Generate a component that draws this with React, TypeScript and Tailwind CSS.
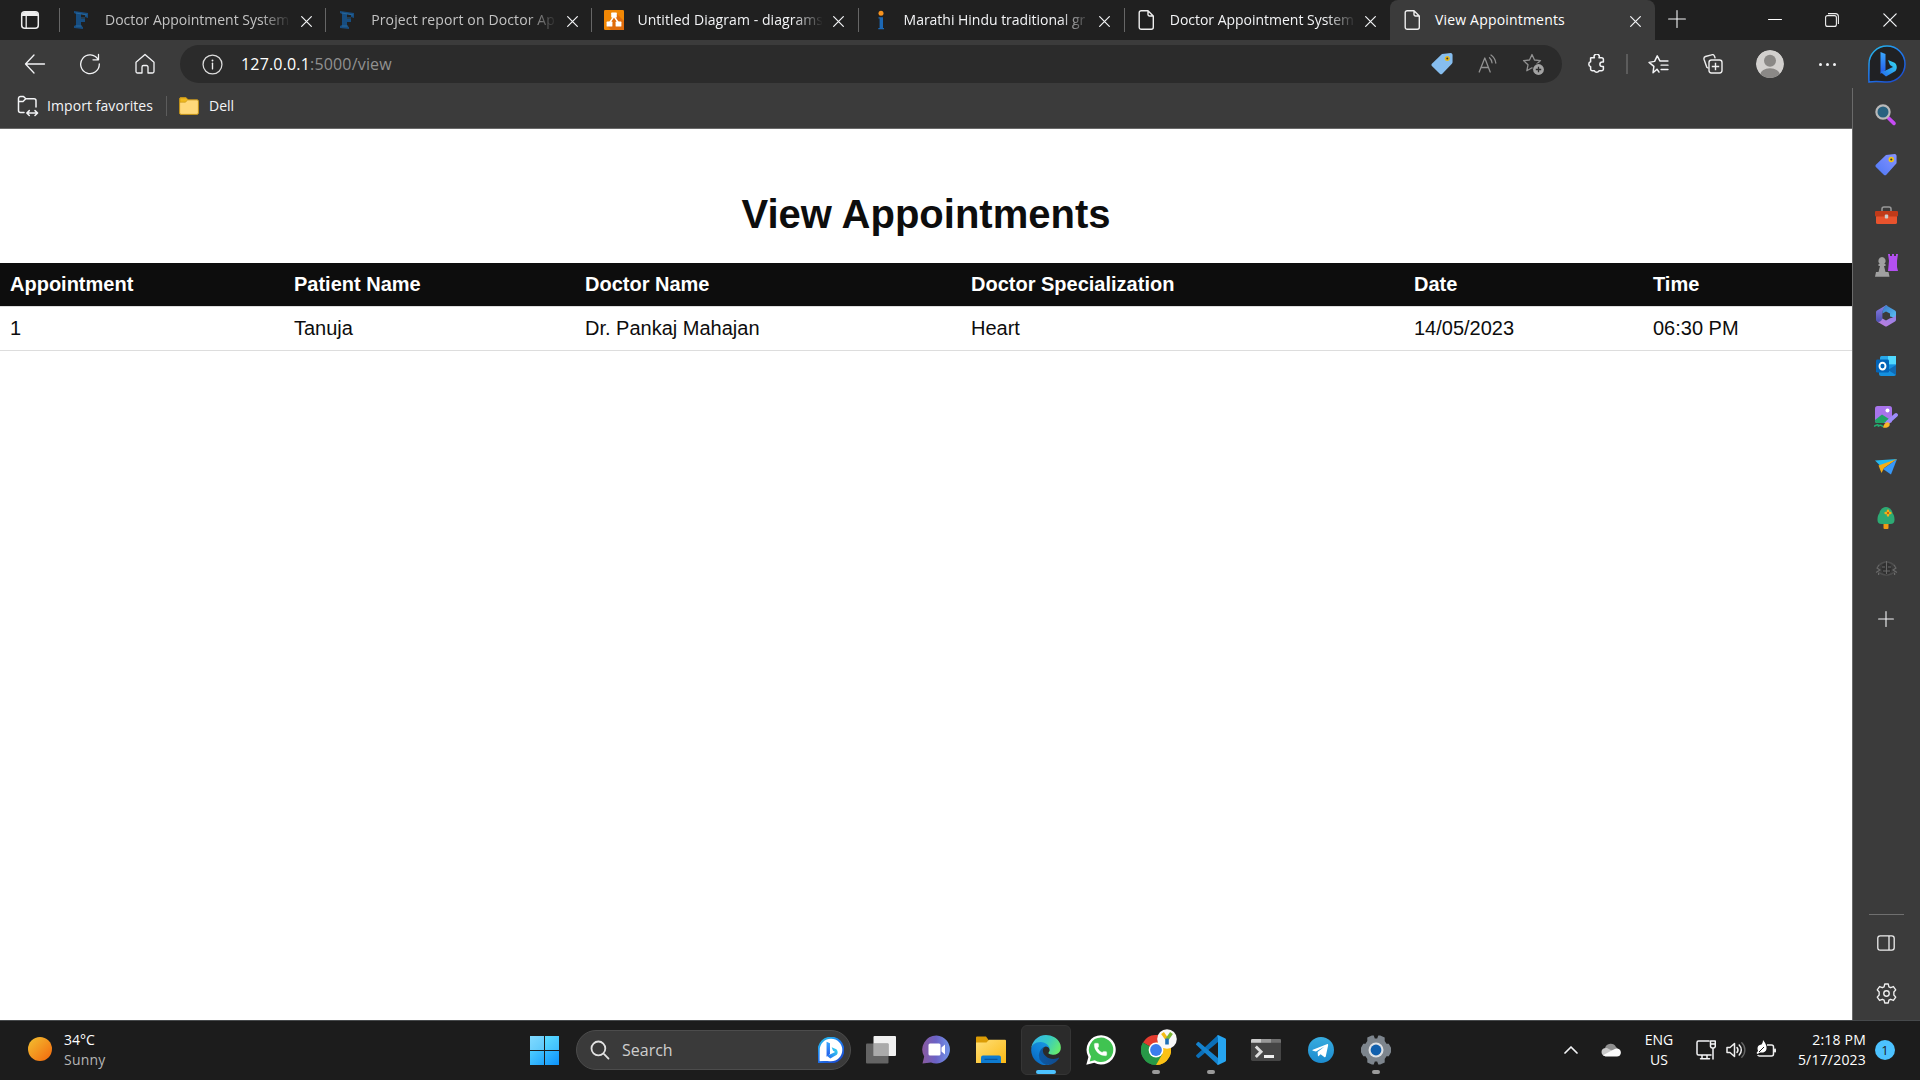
import React from "react";
import { Phone } from "lucide-react";

type IconProps = { s?: number; vb?: string; className?: string; children: React.ReactNode; w?: number };

function Svg({ s = 20, w, vb = "0 0 20 20", className = "", children }: IconProps) {
  return (
    <svg width={w ?? s} height={s} viewBox={vb} fill="none" className={"shrink-0 " + className}>
      {children}
    </svg>
  );
}

function Line({ s = 20, vb, className = "text-gray-100", sw = 1.3, d }: { s?: number; vb?: string; className?: string; sw?: number; d: string }) {
  return (
    <Svg s={s} vb={vb} className={className}>
      <path d={d} stroke="currentColor" strokeWidth={sw} strokeLinecap="round" strokeLinejoin="round" />
    </Svg>
  );
}

function Cell({ className, children }: { className: string; children?: React.ReactNode }) {
  return <div className={"flex shrink-0 items-center justify-center " + className}>{children}</div>;
}

const Close = ({ s = 10, sw = 1.2 }: { s?: number; sw?: number }) => (
  <Line s={s} vb="0 0 10 10" sw={sw} d="M.6 .6L9.4 9.4M9.4 .6L.6 9.4" />
);

const Letter = () => (
  <Svg s={20} w={16} vb="0 0 16 20">
    <path d="M1 1L15 3V8L12 7V5L8 4V9L12 9V12H8V16L10 17V19L1 18V16L3 15V4L1 3Z" fill="#174d80" />
    <path d="M3 3L14 5M8 8H12M3 16H9" stroke="#2b6ea4" strokeWidth=".8" />
  </Svg>
);

const Diagram = () => (
  <Svg s={20} className="ml-0.5">
    <rect width="20" height="20" rx="1.2" fill="#f08705" />
    <path d="M12 3L20 11V20H7L3 16L9 7Z" fill="#df6c0c" />
    <path d="M9.5 7L5.5 13M10.5 7L14.5 13" stroke="#fff" strokeWidth="1.4" />
    <rect x="7.2" y="2.6" width="5.6" height="5" rx=".6" fill="#fff" />
    <rect x="2.6" y="11.6" width="5.8" height="5" rx=".6" fill="#fff" />
    <rect x="11.6" y="11.6" width="5.8" height="5" rx=".6" fill="#fff" />
  </Svg>
);

const Info = () => (
  <Svg s={20} className="ml-0.5">
    <circle cx="10" cy="3.2" r="2.5" fill="#f7931e" />
    <path d="M7.5 7.2H12V18H13V19.2H7.3V18H8.6V8.4H7.5Z" fill="#1c68b5" />
  </Svg>
);

const Doc = () => (
  <Svg s={22} w={17} vb="0 0 17 22" className="ml-0.5">
    <path d="M3.2 1.7H10L15.3 7V18.3A2 2 0 0 1 13.3 20.3H3.2A2 2 0 0 1 1.2 18.3V3.7A2 2 0 0 1 3.2 1.7ZM10 1.7V5.5A1.5 1.5 0 0 0 11.5 7H15.3" stroke="#eee" strokeWidth="1.4" strokeLinejoin="round" />
  </Svg>
);

const tabs = [
  { icon: <Letter />, title: "Doctor Appointment System", tone: "text-[#c3c3c3]" },
  { icon: <Letter />, title: "Project report on Doctor Ap", tone: "text-[#c3c3c3] tracking-[0.13px]" },
  { icon: <Diagram />, title: "Untitled Diagram - diagrams", tone: "text-gray-100 tracking-[0.07px]" },
  { icon: <Info />, title: "Marathi Hindu traditional gr", tone: "text-gray-100" },
  { icon: <Doc />, title: "Doctor Appointment System", tone: "text-gray-100" },
];

function TabBar() {
  return (
    <div className="flex h-10 items-center bg-[#202020] text-[14px] tracking-[-0.02px]">
      <Cell className="h-10 w-[59px]">
        <Svg s={20}>
          <rect x="1.7" y="1.7" width="16.6" height="16.6" rx="3" stroke="#eee" strokeWidth="1.5" />
          <path d="M2 4.5A3 3 0 0 1 5 2H15A3 3 0 0 1 18 4.5V6H2Z" fill="#eee" />
          <path d="M6.2 6V18" stroke="#eee" strokeWidth="1.3" />
        </Svg>
      </Cell>
      {tabs.map((t, i) => (
        <div key={i} className="flex h-10 w-[266.2px] shrink-0 items-center">
          <div className="h-6 w-px shrink-0 bg-[#666]" />
          <Cell className="ml-[11px] w-5">{t.icon}</Cell>
          <div className={"mb-0.5 ml-3.5 w-[186px] overflow-hidden whitespace-nowrap [mask-image:linear-gradient(to_right,black_84%,transparent)] " + t.tone}>{t.title}</div>
          <Cell className="ml-[9px] mt-0.5 w-3"><Close s={11} sw={1.1} /></Cell>
        </div>
      ))}
      <div className="flex h-10 w-[265px] shrink-0 items-center rounded-t-lg bg-[#3b3b3b] text-white">
        <Cell className="ml-[12px] w-5"><Doc /></Cell>
        <div className="mb-0.5 ml-[13px] w-[190px] whitespace-nowrap tracking-[0.19px]">View Appointments</div>
        <Cell className="ml-[5px] mt-0.5 w-3"><Close s={11} sw={1.1} /></Cell>
      </div>
      <Cell className="w-11"><Line s={18} vb="0 0 18 18" sw={1.1} className="text-gray-100 mb-0.5" d="M9 .6V17.4M.6 9H17.4" /></Cell>
      <Cell className="ml-12 w-[57px]"><Line s={14} vb="0 0 14 14" sw={1} className="text-white" d="M.5 6.5H13.5" /></Cell>
      <Cell className="w-14">
        <Svg s={14} vb="0 0 14 14">
          <rect x=".6" y="2.6" width="10.8" height="10.8" rx="2" stroke="#eee" strokeWidth="1.1" />
          <path d="M3 .6H10.4A3 3 0 0 1 13.4 3.6V11" stroke="#eee" strokeWidth="1.1" />
        </Svg>
      </Cell>
      <Cell className="w-[60px]"><Close s={14} sw={0.9} /></Cell>
    </div>
  );
}

const starD = "M10 1.5L12.5 7L18.5 7.6L14 11.8L15.2 17.8L10 14.8L4.8 17.8L6 11.8L1.5 7.6L7.5 7Z";

function BingMark({ dark, s }: { dark?: boolean; s: number }) {
  return (
    <Svg s={s} vb="0 0 38 38">
      <defs>
        <linearGradient id="bingRing" x1="0" y1="0" x2="0.7" y2="1">
          <stop stopColor="#27c3e8" /><stop offset="0.5" stopColor="#1f7df0" /><stop offset="1" stopColor="#1b4fd0" />
        </linearGradient>
        <linearGradient id="bingB" x1="0" y1="0" x2="0" y2="1"><stop stopColor="#3aa8ff" /><stop offset="1" stopColor="#2358e8" /></linearGradient>
        <linearGradient id="bingLeaf" x1="0" y1="1" x2="1" y2="0"><stop stopColor="#2364f0" /><stop offset="1" stopColor="#35dff0" /></linearGradient>
      </defs>
      <path d="M19 1A18 18 0 1 1 19 37C13 37 9 35.5 1 37C.6 32 1 27 1 19A18 18 0 0 1 19 1Z" fill={dark ? "#202124" : "#fff"} stroke="url(#bingRing)" strokeWidth={dark ? 1.5 : 3} />
      <path d="M12.5 7L17.5 9V25L12.5 29Z" fill="url(#bingB)" />
      <path d="M12.5 27L18 31.5L27.5 26C30 23 28.5 18.5 26 17.5L20 15L22 20L25 22L17.5 25.5Z" fill="url(#bingLeaf)" />
    </Svg>
  );
}

function Toolbar() {
  return (
    <div className="flex h-12 items-center">
      <Cell className="ml-2 w-[54px]"><Line s={22} vb="0 0 22 22" d="M20.5 11H1.5M10 2L1.5 11L10 20" /></Cell>
      <Cell className="w-[56px]">
        <Line s={22} vb="0 0 22 22" d="M19 6.5A9.3 9.3 0 1 0 20.3 11M19.5 1.5V6.8H14" />
      </Cell>
      <Cell className="w-[54px]"><Line s={22} vb="0 0 22 22" d="M2 9.2L11 1.5L20 9.2V18.5A1.5 1.5 0 0 1 18.5 20H14V14A1.5 1.5 0 0 0 12.5 12.5H9.5A1.5 1.5 0 0 0 8 14V20H3.5A1.5 1.5 0 0 1 2 18.5Z" /></Cell>
      <div className="ml-2 flex h-[38px] w-[1382px] shrink-0 items-center rounded-full bg-[#2b2b2b]">
        <Cell className="ml-[22px] w-5">
          <Svg s={21}>
            <circle cx="10" cy="10" r="9" stroke="#ddd" strokeWidth="1.2" />
            <path d="M10 8.8V14.2" stroke="#eee" strokeWidth="1.3" strokeLinecap="round" />
            <circle cx="10" cy="6.2" r=".9" fill="#eee" />
          </Svg>
        </Cell>
        <div className="ml-[19px] flex-1 text-[16px] tracking-[0.17px] text-[#919191]"><span className="text-white">127.0.0.1</span>:5000/view</div>
        <Cell className="w-6">
          <Svg s={22}>
            <path d="M10 .8L18 0A2 2 0 0 1 19.6 1.6V8.5A2 2 0 0 1 19 9.8L10.3 18.8A1.6 1.6 0 0 1 8 18.8L.8 11.8A1.6 1.6 0 0 1 .8 9.8Z" fill="#86bdee" />
            <circle cx="14.8" cy="5" r="2.3" fill="#e6b81c" /><circle cx="14.8" cy="5" r=".9" fill="#333" />
          </Svg>
        </Cell>
        <Cell className="ml-[22px] w-6"><Line s={20} className="text-[#919191]" d="M1.2 18L6.8 4L12.2 18M3 13.5H10.4M11.5 3.8A7.5 7.5 0 0 1 14 8.8M13 1A11.5 11.5 0 0 1 17.8 9" /></Cell>
        <Cell className="ml-[21px] mr-[17px] w-6">
          <Svg s={22} vb="0 0 22 22">
            <path d={starD} stroke="#919191" strokeWidth="1.3" strokeLinejoin="round" />
            <circle cx="16.5" cy="16.5" r="6.2" fill="#2b2b2b" /><circle cx="16.5" cy="16.5" r="5.4" fill="#a3a3a3" />
            <path d="M16.5 13.8V19.2M13.8 16.5H19.2" stroke="#2b2b2b" strokeWidth="1.3" />
          </Svg>
        </Cell>
      </div>
      <Cell className="ml-[23px] w-6">
        <Line s={20} sw={1.5} d="M4 3.8H7.4A2.6 2.6 0 1 1 12 3.8H14.6A1.8 1.8 0 0 1 16.4 5.6V8H15.2A2.3 2.3 0 0 0 15.2 12.6H16.4V15A1.8 1.8 0 0 1 14.6 16.8H12A2.6 2.6 0 0 1 7.4 16.8H5.4A1.8 1.8 0 0 1 3.6 15V12.6A2.5 2.5 0 0 1 3.6 7.8V4Z" />
      </Cell>
      <div className="ml-[17px] h-5 w-0.5 bg-[#5c5c5c]" />
      <Cell className="ml-[18px] w-6"><Line s={21} sw={1.4} d="M10.5 17.2L8.6 14.5L4.8 17.8L5.6 11.8L1 8L6.3 7L8.8 1.8L11.3 6.6H19M12.5 10.6H19M12.5 14.8H19" /></Cell>
      <Cell className="ml-[31px] w-6">
        <Svg s={20}>
          <path d="M5 14L3.8 13.3L1 5.2A2.4 2.4 0 0 1 2.5 2.5L8.5 .8A2.4 2.4 0 0 1 11.5 2.2L12 3.8" stroke="#eee" strokeWidth="1.4" strokeLinecap="round" />
          <rect x="6" y="6" width="13" height="13" rx="2.4" stroke="#eee" strokeWidth="1.4" />
          <path d="M12.5 8.8V16.2M8.8 12.5H16.2" stroke="#eee" strokeWidth="1.4" />
        </Svg>
      </Cell>
      <Cell className="ml-[31px] w-7">
        <Svg s={28} vb="0 0 28 28" className="rounded-full">
          <circle cx="14" cy="14" r="14" fill="#d2d0ce" />
          <circle cx="14" cy="10.8" r="6" fill="#8a8886" />
          <ellipse cx="14" cy="25" rx="10" ry="6.7" fill="#8a8886" />
        </Svg>
      </Cell>
      <Cell className="ml-[33px] w-5 gap-1"><i className="size-[3px] rounded-full bg-gray-100" /><i className="size-[3px] rounded-full bg-gray-100" /><i className="size-[3px] rounded-full bg-gray-100" /></Cell>
      <Cell className="ml-[31px] w-[38px]"><BingMark dark s={38} /></Cell>
    </div>
  );
}

function Favorites() {
  return (
    <div className="flex h-[41px] items-center border-b border-[#6a6a6a] pb-1 pl-[17px] text-[14px] text-gray-100">
      <Line s={22} vb="0 0 22 22" sw={1.5} d="M7 17.5H3.5A2 2 0 0 1 1.5 15.5V3.5A2 2 0 0 1 3.5 1.5H6.5L8.8 3.8H17A2 2 0 0 1 19 5.8V12M1.5 6.5H6L8.8 3.8M10 18H20.5M12.3 15.6L9.8 18L12.3 20.5M18 15.6L20.6 18L18 20.5" />
      <span className="mb-0.5 ml-2 w-[107px] whitespace-nowrap tracking-[0.07px]">Import favorites</span>
      <div className="ml-3 h-5 w-px bg-[#5c5c5c]" />
      <Svg s={18} w={20} vb="0 0 20 18" className="ml-3">
        <path d="M.6 16V2A1.4 1.4 0 0 1 2 .6H7L9 2.8H18A1.4 1.4 0 0 1 19.4 4.2V16A1.4 1.4 0 0 1 18 17.4H2A1.4 1.4 0 0 1 .6 16Z" fill="#ffd97a" stroke="#c39217" />
        <path d="M1 5.2V1H7L8.8 2.8L6.5 5.2Z" fill="#f0b91f" stroke="#c39217" strokeWidth=".6" />
      </Svg>
      <span className="mb-0.5 ml-2.5">Dell</span>
    </div>
  );
}

const columns = [
  { head: "Appointment", value: "1", w: "w-[284px]" },
  { head: "Patient Name", value: "Tanuja", w: "w-[291px]" },
  { head: "Doctor Name", value: "Dr. Pankaj Mahajan", w: "w-[386px]" },
  { head: "Doctor Specialization", value: "Heart", w: "w-[443px]" },
  { head: "Date", value: "14/05/2023", w: "w-[239px]" },
  { head: "Time", value: "06:30 PM", w: "w-[209px]" },
];

function Page() {
  return (
    <main className="min-h-0 flex-1 bg-white font-['Liberation_Sans',Arial,sans-serif] text-[20px] text-[#0d0d0d]">
      <h1 className="mt-[62px] h-[72px] text-center text-[40px] font-bold leading-[46px]">View Appointments</h1>
      <table className="w-[1852px] table-fixed border-collapse text-left">
        <thead>
          <tr className="h-[43px] bg-[#0d0d0d] text-white">
            {columns.map((c) => <th key={c.head} className={"border-b border-[#ddd] px-2.5 py-0 font-bold " + c.w}>{c.head}</th>)}
          </tr>
        </thead>
        <tbody>
          <tr className="h-11">
            {columns.map((c) => <td key={c.head} className="border-b border-[#ddd] px-2.5 py-0">{c.value}</td>)}
          </tr>
        </tbody>
      </table>
    </main>
  );
}

const sideIcons = [
  <Svg s={22} vb="0 0 22 22">
    <path d="M13.5 14L19 19.4" stroke="#c74bf5" strokeWidth="3.6" strokeLinecap="round" />
    <circle cx="8" cy="8" r="6.6" fill="#28617f" stroke="#b9b9b9" strokeWidth="2.2" />
  </Svg>,
  <Svg s={22}>
    <defs><linearGradient id="tg" x1="0" y1="1" x2="1" y2="0"><stop stopColor="#4d78f5" /><stop offset="1" stopColor="#8793ff" /></linearGradient></defs>
    <path d="M10 .8L18 0A2 2 0 0 1 19.6 1.6V8.5L10.3 18.8A1.6 1.6 0 0 1 8 18.8L.8 11.8A1.6 1.6 0 0 1 .8 9.8Z" fill="url(#tg)" />
    <circle cx="14.8" cy="5" r="2.5" fill="#f0c414" /><circle cx="14.8" cy="5" r="1" fill="#333" />
  </Svg>,
  <Svg s={18} w={23} vb="0 0 23 18">
    <path d="M7 5V3A2 2 0 0 1 9 1H14A2 2 0 0 1 16 3V5" stroke="#999" strokeWidth="1.5" />
    <rect x="1" y="9" width="21" height="9" rx="1.6" fill="#e8532d" /><rect y="5" width="23" height="5.5" rx="1" fill="#c03a19" />
    <rect x="9.8" y="8.5" width="3.4" height="4" rx="1" fill="#ccc" />
  </Svg>,
  <Svg s={23} w={23} vb="0 0 23 23">
    <path d="M13 0H15V2H17V0H19V2H21V0H23L22 7V13L23 17H13L14 7Z" fill="#b350f0" />
    <path d="M7 3A4 4 0 0 1 9.3 10H10.5V12H9L10.5 18H13.5L14.5 22.8H0L1 18H3.5L5 12H3.5V10H4.7A4 4 0 0 1 7 3Z" fill="#a0a0a0" />
  </Svg>,
  <Svg s={22} vb="0 0 22 22">
    <defs>
      <linearGradient id="m365a" x1="0" y1="0" x2="0" y2="1"><stop stopColor="#8d7ee6" /><stop offset="1" stopColor="#4b4fae" /></linearGradient>
      <linearGradient id="m365b" x1="0" y1="0" x2="1" y2="1"><stop stopColor="#3a78c8" /><stop offset="1" stopColor="#58c4f5" /></linearGradient>
      <linearGradient id="m365c" x1="0" y1="1" x2="1" y2="0"><stop stopColor="#c27bdc" /><stop offset="1" stopColor="#8f83ea" /></linearGradient>
    </defs>
    <path d="M11 .2L2 5.4A2 2 0 0 0 1 7.2V14.8A2 2 0 0 0 2 16.6L4 17.5L7.4 15V8.5C7.4 5 9 2 12.5 .8Z" fill="url(#m365a)" />
    <path d="M11 .2L20 5.4A2 2 0 0 1 21 7.2V13.5C20 13 19 12.5 15 11.5V8.6L11 6.4L7.4 8.5C7.4 4.5 9 1.5 11 .2Z" fill="url(#m365b)" />
    <path d="M21 9.5V14.8A2 2 0 0 1 20 16.6L12 21.3A2 2 0 0 1 10 21.3L2 16.6C5 17.5 6 16.5 7.4 13.6L11 15.6L15 13.3C18 12.5 20 12 21 9.5Z" fill="url(#m365c)" />
  </Svg>,
  <Svg s={21} vb="0 0 21 21">
    <rect x="4" y="0" width="16" height="16" rx="1.5" fill="#28a8ea" /><rect x="12" y="0" width="8" height="8" fill="#50d9ff" />
    <path d="M3 9L20 9V18A2 2 0 0 1 18 20H5A2 2 0 0 1 3 18Z" fill="#1490df" /><path d="M20 9L12 14L20 19Z" fill="#0f6ab4" />
    <rect y="3.6" width="13" height="13" rx="1.4" fill="#0364b8" />
    <ellipse cx="6.5" cy="10.1" rx="3" ry="3.4" stroke="#fff" strokeWidth="1.9" />
  </Svg>,
  <Svg s={23} w={24} vb="0 0 24 23">
    <rect x="1" y="0" width="17" height="17" rx="2.5" fill="#a874ec" /><circle cx="13.5" cy="4.5" r="2" fill="#fff" />
    <path d="M1 14L8 8.5L15 13L10 17H3A2 2 0 0 1 1 15Z" fill="#21a366" />
    <path d="M0 20.5C3 18 5 18 4 20.5C6 18.5 8 19 9 21" stroke="#20b070" strokeWidth="1.5" />
    <path d="M14 16L22 9" stroke="#9d8dfa" strokeWidth="3.8" strokeLinecap="round" /><path d="M9 21.5C10 17 13 14.5 15.5 17.5C16.5 20.5 13 22.5 9 21.5Z" fill="#f8b52a" />
  </Svg>,
  <Svg s={16} w={22} vb="0 0 22 16">
    <path d="M0 1.5L22 0L6 7.5Z" fill="#25b8ef" /><path d="M22 0L16 15.5L8 10Z" fill="#3898f7" /><path d="M22 0L3.5 6.5L6.5 14L9 9Z" fill="#f6ae16" />
  </Svg>,
  <Svg s={22} vb="0 0 22 22">
    <rect x="8.5" y="15" width="5" height="7" rx="1" fill="#f29a14" />
    <path d="M11 0C15 0 17.5 4 17.5 6C19 8 19.5 10 19.5 12.5A4.3 4.3 0 0 1 15.5 17H6.5A4.3 4.3 0 0 1 2.5 12.5C2.5 10 3 8 4.5 6C4.5 4 7 0 11 0Z" fill="#2daa74" />
    <path d="M13 3.6V8.4M10.6 6H15.4" stroke="#f6ae16" strokeWidth="2.4" strokeLinecap="round" /><circle cx="13" cy="6" r="1" fill="#b34c11" />
  </Svg>,
  <Svg s={17} w={23} vb="0 0 23 17">
    <path d="M3 6C6 3 8 2 11.5 2S17 3 20 6M2 11C6 14.5 8 15 11.5 15S17 14.5 21 11" stroke="#4e4e4e" strokeWidth="1.4" />
    <ellipse cx="11.5" cy="8.5" rx="5" ry="6" fill="#2f2f2f" />
    <path d="M7 7H10M13 7H16M8 11H15M11.5 1V14M4 5L2 8L5 10L1 12.5M19 5L21 8L18 10L22 12.5" stroke="#686868" strokeWidth="1.1" />
    <path d="M3 14H4.2M19 14H20.2" stroke="#999" strokeWidth="1.2" />
  </Svg>,
  <Line s={16} vb="0 0 16 16" sw={1.1} d="M8 .6V15.4M.6 8H15.4" />,
];

const gearD = "M8.3 1H11.7L12.3 3.6L14 4.5L16.6 3.4L18.8 6.5L17 8.6V11.4L18.8 13.5L16.6 16.6L14 15.5L12.3 16.4L11.7 19H8.3L7.7 16.4L6 15.5L3.4 16.6L1.2 13.5L3 11.4V8.6L1.2 6.5L3.4 3.4L6 4.5L7.7 3.6Z";

function Sidebar() {
  return (
    <aside className="flex w-[68px] shrink-0 flex-col items-center border-l border-[#6a6a6a] bg-[#3b3b3b] pr-px pt-[1.5px]">
      {sideIcons.map((icon, i) => <Cell key={i} className="h-[50.4px] w-full">{icon}</Cell>)}
      <div className="mt-auto h-px w-[35px] bg-[#6f6f6f]" />
      <Cell className="mt-[2px] h-[51px]">
        <Svg s={16} w={18} vb="0 0 18 16">
          <rect x=".8" y=".8" width="16.4" height="14.4" rx="2.4" stroke="#eee" strokeWidth="1.3" /><path d="M12 1V15" stroke="#eee" strokeWidth="1.3" />
        </Svg>
      </Cell>
      <Cell className="mb-[2px] h-[50px]">
        <Svg s={21}><path d={gearD} stroke="#eee" strokeWidth="1.3" strokeLinejoin="round" /><circle cx="10" cy="10" r="2.6" stroke="#eee" strokeWidth="1.3" /></Svg>
      </Cell>
    </aside>
  );
}

const apps: { icon: React.ReactNode; dot?: boolean; active?: boolean }[] = [
  {
    icon: (
      <Svg s={30} vb="0 0 30 30">
        <rect x="7.5" y="1" width="22.5" height="20" rx="1" fill="#f0f0f0" />
        <rect x="0" y="8.5" width="22.5" height="20" rx="1" fill="#777" fillOpacity=".8" /><rect x="7.5" y="8.5" width="15" height="12.5" fill="#aaa" />
      </Svg>
    ),
  },
  {
    icon: (
      <Svg s={29} vb="0 0 29 29">
        <defs><linearGradient id="chat" x1="0" y1="0" x2="1" y2="0"><stop stopColor="#8a5a9f" /><stop offset=".5" stopColor="#6b62c6" /><stop offset="1" stopColor="#7296e8" /></linearGradient></defs>
        <path d="M14.5 .5A14 14 0 1 1 9 27.6L.5 28.5L2.2 21.5A14 14 0 0 1 14.5 .5Z" fill="url(#chat)" />
        <rect x="6.5" y="8.5" width="12" height="12" rx="1.5" fill="#fff" /><path d="M19.5 12.5L23 9.5V19.5L19.5 16.5Z" fill="#fff" />
      </Svg>
    ),
  },
  {
    icon: (
      <Svg s={30} vb="0 0 30 30">
        <defs><linearGradient id="fold" x1="0" y1="0" x2="1" y2="1"><stop stopColor="#ffdf77" /><stop offset="1" stopColor="#fbb914" /></linearGradient></defs>
        <path d="M0 2.6A1 1 0 0 1 1 1.6H10L13 5.5V9H0Z" fill="#dc9c05" />
        <path d="M0 7.5H10.5L13 4.8H29A1 1 0 0 1 30 5.8V28H0Z" fill="url(#fold)" />
        <path d="M5 28V22.5A2 2 0 0 1 7 20.5H23A2 2 0 0 1 25 22.5V28Z" fill="#0e7bd0" /><path d="M8.5 24.3H21.5" stroke="#084d90" />
      </Svg>
    ),
  },
  {
    active: true,
    icon: (
      <Svg s={30} vb="0 0 256 259">
        <defs>
          <linearGradient id="e1" x1="0" y1="0" x2="1" y2="0"><stop stopColor="#0c59a4" /><stop offset="1" stopColor="#114a8b" /></linearGradient>
          <linearGradient id="e2" x1="1" y1="0" x2="0.3" y2="1"><stop stopColor="#1b9de2" /><stop offset=".6" stopColor="#0f7fd6" /><stop offset="1" stopColor="#0868bf" /></linearGradient>
          <linearGradient id="e3" x1="0" y1="0.2" x2="1" y2=".6"><stop stopColor="#35b5ea" /><stop offset=".5" stopColor="#36c9c6" /><stop offset="1" stopColor="#66eb6e" /></linearGradient>
        </defs>
        <path fill="url(#e1)" d="M235.68 195.46a93.73 93.73 0 0 1-10.54 4.71 101.87 101.87 0 0 1-35.9 6.46c-47.32 0-88.54-32.55-88.54-74.32A31.48 31.48 0 0 1 117.13 105c-42.8 1.8-53.8 46.4-53.8 72.53 0 73.88 68.09 81.37 82.76 81.37 7.91 0 19.84-2.3 27-4.56l1.31-.44a128.34 128.34 0 0 0 66.6-52.8 4 4 0 0 0-5.32-5.64z" />
        <path fill="url(#e2)" d="M105.73 246.42A79.2 79.2 0 0 1 83 225.08a80.72 80.72 0 0 1 29.5-120.79c3.12-1.47 8.45-4.13 15.54-4a32.35 32.35 0 0 1 25.69 13 31.88 31.88 0 0 1 6.36 18.66c0-.21 24.46-79.6-80-79.6-43.9 0-80 41.66-80 78.21a130.15 130.15 0 0 0 12.11 56 128 128 0 0 0 156.38 67.11 75.55 75.55 0 0 1-62.78-8z" />
        <path fill="url(#e3)" d="M152.33 148.86c-.81 1.05-3.3 2.5-3.3 5.66 0 2.61 1.7 5.12 4.72 7.23 14.38 10 41.49 8.68 41.56 8.68a59.56 59.56 0 0 0 30.27-8.35A61.38 61.38 0 0 0 256 109.18c.26-22.41-8-37.31-11.34-43.91C223.46 23.84 177.72 0 128 0A128 128 0 0 0 0 126.2c.48-36.54 36.8-66.05 80-66.05 3.5 0 23.46.34 42 10.07 16.34 8.58 24.9 18.94 30.85 29.21 6.18 10.67 7.28 24.15 7.28 29.52s-2.74 13.33-7.8 19.91z" />
      </Svg>
    ),
  },
  {
    icon: (
      <div className="relative size-[30px]">
        <Svg s={30} vb="0 0 30 30">
          <path d="M15.2 .2A14.6 14.6 0 1 1 8.3 27.7L.3 29.8L2.4 22A14.6 14.6 0 0 1 15.2 .2Z" fill="#fff" />
          <path d="M15.2 2.6A12.2 12.2 0 1 1 8.7 25.2L3.7 26.4L5 21.6A12.2 12.2 0 0 1 15.2 2.6Z" fill="#40c351" />
        </Svg>
        <Phone className="absolute left-[7px] top-[7px] fill-white text-white" size={15} strokeWidth={0.5} />
      </div>
    ),
  },
  {
    dot: true,
    icon: (
      <div className="relative size-[30px]">
        <Svg s={30} vb="-15 -15 30 30">
          <path d="M0 0L-13 -7.5A15 15 0 0 1 13 -7.5Z" fill="#e33b2e" />
          <path d="M0 0L13 -7.5A15 15 0 0 1 0 15Z" fill="#fbbe0b" />
          <path d="M0 0V15A15 15 0 0 1 -13 -7.5Z" fill="#279847" />
          <path d="M0 -7.5H13A15 15 0 0 1 0 15L6.5 3.75Z" fill="#fbc116" />
          <path d="M-6.5 3.75L-13 -7.5A15 15 0 0 0 0 15L6.5 3.75Z" fill="#279847" />
          <circle r="7.4" fill="#fff" /><circle r="5.9" fill="#3b7ded" />
        </Svg>
        <div className="absolute -top-1.5 left-4">
          <Svg s={20}>
            <circle cx="10" cy="10" r="9.8" fill="#f8f8f8" />
            <path d="M5.5 4L9.8 10" stroke="#f4bd16" strokeWidth="3.4" /><path d="M14.5 4L10.3 10" stroke="#7cb832" strokeWidth="3.4" /><path d="M10 9.5V15.5" stroke="#1d70b8" strokeWidth="3.6" />
          </Svg>
        </div>
      </div>
    ),
  },
  {
    dot: true,
    icon: (
      <Svg s={30} vb="0 0 30 30">
        <path d="M22 7L3.2 22.8A1.2 1.2 0 0 1 1.6 22.8L.4 21.6A1.2 1.2 0 0 1 .4 20L22 0Z" fill="#0b6fb8" />
        <path d="M22 23L3.2 7.2A1.2 1.2 0 0 0 1.6 7.2L.4 8.4A1.2 1.2 0 0 0 .4 10L22 30Z" fill="#1583cf" />
        <path d="M22 0L29 3.2A1.8 1.8 0 0 1 30 5V25A1.8 1.8 0 0 1 29 26.8L22 30C20.5 29 22 28 22 27V3C22 2 20.5 1 22 0Z" fill="#26a5f1" />
      </Svg>
    ),
  },
  {
    icon: (
      <Svg s={30} vb="0 0 30 30">
        <rect y="4" width="30" height="22" rx="1.4" fill="#454545" /><path d="M0 7.8V5.4A1.4 1.4 0 0 1 1.4 4H10V7.8Z" fill="#ccc" />
        <path d="M10 4H20V7.8H10Z" fill="#999" /><path d="M20 4H28.6A1.4 1.4 0 0 1 30 5.4V7.8H20Z" fill="#707070" />
        <path d="M4.8 11.5L10 16.8L4.8 22" stroke="#ddd" strokeWidth="3" /><path d="M13 21.5H23" stroke="#eee" strokeWidth="3" />
      </Svg>
    ),
  },
  {
    icon: (
      <Svg s={26} vb="0 0 26 26" className="-ml-px">
        <defs><linearGradient id="tel" x1="0" y1="0" x2="0" y2="1"><stop stopColor="#38acdf" /><stop offset="1" stopColor="#1c8bcf" /></linearGradient></defs>
        <circle cx="13" cy="13" r="13" fill="url(#tel)" />
        <path d="M4.8 12.8L18.8 7.2C19.7 6.9 20.4 7.4 20.1 8.6L17.8 19.3C17.6 20.3 16.9 20.4 16.2 20L12.6 17.3L10.8 19C10.4 19.4 9.9 19.3 9.9 18.6L9.6 15L16.5 9.5L8 14.6L5 13.7C4.2 13.4 4.2 13.1 4.8 12.8Z" fill="#fff" />
      </Svg>
    ),
  },
  {
    dot: true,
    icon: (
      <Svg s={30} vb="0 0 20 20">
        <path d="M7.2 .3H8.5L9.2 2.4H10.8L11.5 .3H12.8L15.8 1.6V4L17 5.8H18.5L20 8.5V11.5L18.5 14.2H17L15.8 16V18.4L12.8 19.7H11.5L10.8 17.6H9.2L8.5 19.7H7.2L4.2 18.4V16L3 14.2H1.5L0 11.5V8.5L1.5 5.8H3L4.2 4V1.6Z" fill="#7d858d" />
        <circle cx="10" cy="10" r="5" fill="#dfe2e5" /><circle cx="10" cy="10" r="3.6" fill="#1160ad" />
      </Svg>
    ),
  },
];

function Taskbar() {
  return (
    <footer className="flex h-[60px] shrink-0 items-center border-t border-[#46494b] bg-[#1c1c1c] pb-0.5 text-[14px] leading-5 text-white">
      <Cell className="ml-7 w-6"><div className="mb-0.5 size-6 rounded-full bg-linear-to-br from-[#f0c030] to-[#f1640a]" /></Cell>
      <div className="ml-[12px] w-[466px]">
        <div>34°C</div>
        <div className="tracking-[0.2px] text-[#b5b5b5]">Sunny</div>
      </div>
      <div className="mt-0.5 grid size-[29px] shrink-0 grid-cols-2 gap-px">
        <i className="bg-linear-to-br from-[#80daff] to-[#5cc8fa]" />
        <i className="bg-linear-to-br from-[#5cdcff] to-[#3cbcff]" />
        <i className="bg-linear-to-br from-[#4ccdff] to-[#20a4fb]" />
        <i className="bg-linear-to-br from-[#35bbff] to-[#0a92f9]" />
      </div>
      <div className="ml-[17px] flex h-10 w-[275px] shrink-0 items-center rounded-full border border-[#4c4c4c] bg-[#3a3a3a]">
        <Line s={20} sw={1.8} className="ml-[13px] text-[#e2e2e2]" d="M15.3 8.4A6.9 6.9 0 1 1 1.5 8.4A6.9 6.9 0 1 1 15.3 8.4ZM13.4 13.4L18.5 18.6" />
        <span className="ml-3 flex-1 text-[16px] tracking-[0px] text-[#cecece]">Search</span>
        <div className="mr-[6px]"><BingMark s={26} /></div>
      </div>
      <div className="ml-[2.5px] flex">
        {apps.map((a, i) => (
          <div key={i} className="flex h-[57px] w-[55px] shrink-0 items-center justify-center">
            <div className={"relative flex h-[50px] w-[50px] items-center justify-center rounded-md border " + (a.active ? "border-[#353535] bg-[#2b2b2b]" : "border-transparent")}>
              {a.icon}
              {a.active && <div className="absolute bottom-0 h-1 w-5 rounded-full bg-[#4cc2ff]" />}
              {a.dot && <div className="absolute bottom-0 h-1 w-2 rounded-full bg-[#9a9a9a]" />}
            </div>
          </div>
        ))}
      </div>
      <div className="flex-1" />
      <Line s={14} vb="0 0 14 14" sw={1.7} className="text-gray-100" d="M1 10L7 4L13 10" />
      <Svg s={14} w={20} vb="0 0 20 14" className="ml-[23px]">
        <path d="M4 5A6 6 0 0 1 15 4L18 7L6 10Z" fill="#8f8f8f" />
        <path d="M.5 9C.5 6 3 4.5 6 5L17 11L4 13C2 13 .5 11 .5 9Z" fill="#c9c9c9" />
        <path d="M2 12.3C7 10 12 6 16 5.6C19 6 20 8 19.9 10C19.5 12.5 18 13.5 16 13.5H4.5Z" fill="#fafafa" />
      </Svg>
      <div className="ml-[22px] w-8 text-center">ENG<br />US</div>
      <div className="ml-[21px] flex gap-2.5">
        <Line s={20} sw={1.5} d="M13 1H2.5A1.5 1.5 0 0 0 1 2.5V13.5A1.5 1.5 0 0 0 2.5 15H15M6 15.5V18.5M11 15.5V18.5M4.5 18.7H13.5M14.5 1H19.3V6.5A2 2 0 0 1 17.3 8H16.5A2 2 0 0 1 14.5 6.5ZM14.5 4H19.3M17 8.5V19" />
        <Svg s={20}>
          <path d="M1 7.5H4L8.5 3.5V16.5L4 12.5H1ZM11 7.5A4 4 0 0 1 11 12.5M13.2 5A7 7 0 0 1 13.2 15" stroke="#eee" strokeWidth="1.5" strokeLinejoin="round" strokeLinecap="round" />
          <path d="M15.8 2.8A10 10 0 0 1 15.8 17.2" stroke="#666" strokeWidth="1.4" strokeLinecap="round" />
        </Svg>
        <Svg s={20}>
          <path d="M11 5H15.5A2 2 0 0 1 17.5 7V14A2 2 0 0 1 15.5 16H3.5A2 2 0 0 1 1.7 15" stroke="#eee" strokeWidth="1.5" /><rect x="18" y="8.5" width="2" height="4" rx=".8" fill="#eee" />
          <path d="M7 0C9 3 11 5 10.5 9C10 12 7 13 4 12.5L1.5 14L.5 13L2 11C.5 6 3 5 5.5 4.5C6.5 3 7 2 7 0Z" fill="#fff" /><path d="M3 12L8 7" stroke="#1c1c1c" strokeWidth="1" />
        </Svg>
      </div>
      <div className="ml-5 w-[70px] whitespace-nowrap text-right tracking-[0.2px]">
        <div>2:18 PM</div>
        <div>5/17/2023</div>
      </div>
      <Cell className="ml-[9px] mr-[25px] size-5 rounded-full bg-[#4cc2ff] text-[13px] text-[#1c1c1c]">1</Cell>
    </footer>
  );
}

export default function App() {
  return (
    <div className="flex h-[1080px] w-[1920px] flex-col overflow-hidden bg-[#3b3b3b] font-['Open_Sans','Noto_Sans',sans-serif]">
      <TabBar />
      <Toolbar />
      <div className="flex min-h-0 flex-1">
        <div className="flex w-[1852px] shrink-0 flex-col">
          <Favorites />
          <Page />
        </div>
        <Sidebar />
      </div>
      <Taskbar />
    </div>
  );
}
